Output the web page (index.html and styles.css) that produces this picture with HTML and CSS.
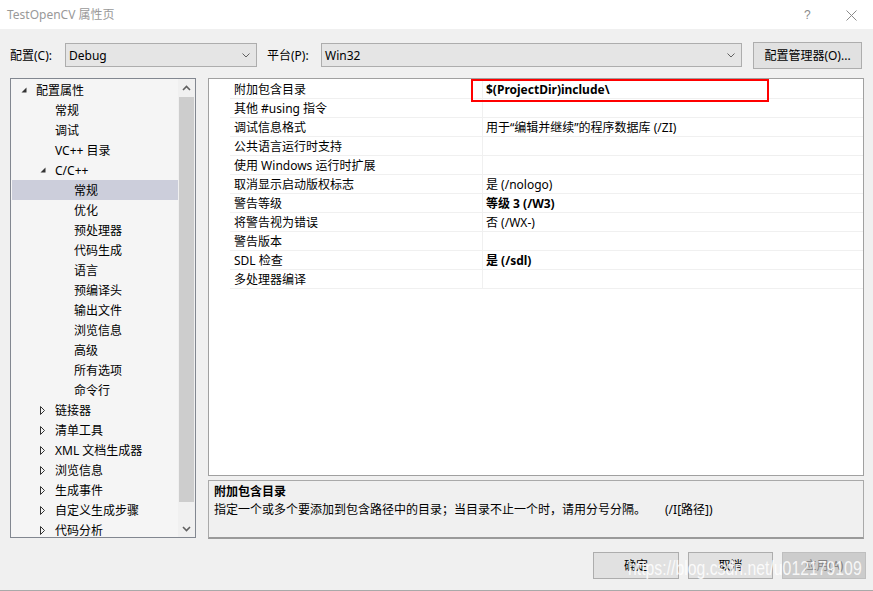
FILE: index.html
```html
<!DOCTYPE html>
<html lang="zh-CN">
<head>
<meta charset="utf-8">
<title>TestOpenCV 属性页</title>
<link rel="stylesheet" href="styles.css">
</head>
<body>
<div class="window">
  <div class="titlebar">
    <span class="title">TestOpenCV 属性页</span>
    <span class="help">?</span>
    <span class="close"><svg width="11" height="11" viewBox="0 0 11 11"><path d="M0.5 0.5 L10.5 10.5 M10.5 0.5 L0.5 10.5" stroke="#8a8a8a" stroke-width="1" fill="none"/></svg></span>
  </div>

  <div class="toolbar">
    <span class="lbl lbl-config">配置(C):</span>
    <div class="combo combo-config"><span>Debug</span><svg class="chev" width="8" height="5" viewBox="0 0 8 5"><path d="M0.5 0.5 L4 4 L7.5 0.5" stroke="#606060" fill="none"/></svg></div>
    <span class="lbl lbl-platform">平台(P):</span>
    <div class="combo combo-platform"><span>Win32</span><svg class="chev" width="8" height="5" viewBox="0 0 8 5"><path d="M0.5 0.5 L4 4 L7.5 0.5" stroke="#606060" fill="none"/></svg></div>
    <div class="btn btn-manager">配置管理器(O)...</div>
  </div>

  <div class="main">
    <div class="tree">
      <div class="tree-list">
        <div class="trow l0"><span class="tw"><svg width="6" height="6" viewBox="0 0 6 6"><path d="M5.5 0.5 L5.5 5.5 L0.5 5.5 Z" fill="#333"/></svg></span>配置属性</div>
        <div class="trow l1"><span class="tw"></span>常规</div>
        <div class="trow l1"><span class="tw"></span>调试</div>
        <div class="trow l1"><span class="tw"></span>VC++ 目录</div>
        <div class="trow l1"><span class="tw"><svg width="6" height="6" viewBox="0 0 6 6"><path d="M5.5 0.5 L5.5 5.5 L0.5 5.5 Z" fill="#333"/></svg></span>C/C++</div>
        <div class="trow l2 sel"><span class="tw"></span>常规</div>
        <div class="trow l2"><span class="tw"></span>优化</div>
        <div class="trow l2"><span class="tw"></span>预处理器</div>
        <div class="trow l2"><span class="tw"></span>代码生成</div>
        <div class="trow l2"><span class="tw"></span>语言</div>
        <div class="trow l2"><span class="tw"></span>预编译头</div>
        <div class="trow l2"><span class="tw"></span>输出文件</div>
        <div class="trow l2"><span class="tw"></span>浏览信息</div>
        <div class="trow l2"><span class="tw"></span>高级</div>
        <div class="trow l2"><span class="tw"></span>所有选项</div>
        <div class="trow l2"><span class="tw"></span>命令行</div>
        <div class="trow l1"><span class="tw"><svg width="6" height="9" viewBox="0 0 6 9"><path d="M0.5 0.5 L4.5 4.5 L0.5 8.5 Z" stroke="#333" fill="none"/></svg></span>链接器</div>
        <div class="trow l1"><span class="tw"><svg width="6" height="9" viewBox="0 0 6 9"><path d="M0.5 0.5 L4.5 4.5 L0.5 8.5 Z" stroke="#333" fill="none"/></svg></span>清单工具</div>
        <div class="trow l1"><span class="tw"><svg width="6" height="9" viewBox="0 0 6 9"><path d="M0.5 0.5 L4.5 4.5 L0.5 8.5 Z" stroke="#333" fill="none"/></svg></span>XML 文档生成器</div>
        <div class="trow l1"><span class="tw"><svg width="6" height="9" viewBox="0 0 6 9"><path d="M0.5 0.5 L4.5 4.5 L0.5 8.5 Z" stroke="#333" fill="none"/></svg></span>浏览信息</div>
        <div class="trow l1"><span class="tw"><svg width="6" height="9" viewBox="0 0 6 9"><path d="M0.5 0.5 L4.5 4.5 L0.5 8.5 Z" stroke="#333" fill="none"/></svg></span>生成事件</div>
        <div class="trow l1"><span class="tw"><svg width="6" height="9" viewBox="0 0 6 9"><path d="M0.5 0.5 L4.5 4.5 L0.5 8.5 Z" stroke="#333" fill="none"/></svg></span>自定义生成步骤</div>
        <div class="trow l1"><span class="tw"><svg width="6" height="9" viewBox="0 0 6 9"><path d="M0.5 0.5 L4.5 4.5 L0.5 8.5 Z" stroke="#333" fill="none"/></svg></span>代码分析</div>
      </div>
      <div class="vscroll">
        <div class="sb-btn"><svg width="9" height="6" viewBox="0 0 9 6"><path d="M1 5 L4.5 1.5 L8 5" stroke="#606060" stroke-width="1.6" fill="none"/></svg></div>
        <div class="sb-thumb"></div>
        <div class="sb-space"></div>
        <div class="sb-btn"><svg width="9" height="6" viewBox="0 0 9 6"><path d="M1 1 L4.5 4.5 L8 1" stroke="#606060" stroke-width="1.6" fill="none"/></svg></div>
      </div>
    </div>

    <div class="right">
      <div class="grid">
        <div class="grow"><span class="gm"></span><span class="gn">附加包含目录</span><span class="gv b">$(ProjectDir)include\</span></div>
        <div class="grow"><span class="gm"></span><span class="gn">其他 #using 指令</span><span class="gv"></span></div>
        <div class="grow"><span class="gm"></span><span class="gn">调试信息格式</span><span class="gv">用于“编辑并继续”的程序数据库 (/ZI)</span></div>
        <div class="grow"><span class="gm"></span><span class="gn">公共语言运行时支持</span><span class="gv"></span></div>
        <div class="grow"><span class="gm"></span><span class="gn">使用 Windows 运行时扩展</span><span class="gv"></span></div>
        <div class="grow"><span class="gm"></span><span class="gn">取消显示启动版权标志</span><span class="gv">是 (/nologo)</span></div>
        <div class="grow"><span class="gm"></span><span class="gn">警告等级</span><span class="gv b">等级 3 (/W3)</span></div>
        <div class="grow"><span class="gm"></span><span class="gn">将警告视为错误</span><span class="gv">否 (/WX-)</span></div>
        <div class="grow"><span class="gm"></span><span class="gn">警告版本</span><span class="gv"></span></div>
        <div class="grow"><span class="gm"></span><span class="gn">SDL 检查</span><span class="gv b">是 (/sdl)</span></div>
        <div class="grow"><span class="gm"></span><span class="gn">多处理器编译</span><span class="gv"></span></div>
        <div class="annot"></div>
      </div>
      <div class="desc">
        <div class="desc-title">附加包含目录</div>
        <div class="desc-text"><span>指定一个或多个要添加到包含路径中的目录；当目录不止一个时，请用分号分隔。</span><span class="desc-switch">(/I[路径])</span></div>
      </div>
    </div>
  </div>

  <div class="footer">
    <div class="btn btn-ok">确定</div>
    <div class="btn btn-cancel">取消</div>
    <div class="btn btn-apply disabled">应用(A)</div>
  </div>

  <div class="watermark">https://blog.csdn.net/u012179109</div>
</div>
</body>
</html>
```
FILE: styles.css
```css
html, body {
  margin: 0;
  padding: 0;
}
body {
  width: 873px;
  height: 591px;
  overflow: hidden;
  background: #f0f0f0;
  font-family: "Noto Sans", "Noto Sans CJK SC", sans-serif;
  font-size: 12px;
  color: #000;
}
.window {
  position: relative;
  width: 873px;
  height: 591px;
  box-sizing: border-box;
  background: #f0f0f0;
  display: flex;
  flex-direction: column;
  border-bottom: 1px solid #a9a9a9;
}

/* title bar */
.titlebar {
  height: 29px;
  background: #fff;
  display: flex;
  align-items: center;
  padding-left: 7px;
  padding-top: 1px;
  box-sizing: border-box;
  flex: none;
}
.title {
  color: #999;
  line-height: 14px;
}
.help {
  margin-left: auto;
  color: #8a8a8a;
  font-family: "Liberation Sans", sans-serif;
  font-size: 12px;
  line-height: 12px;
  width: 12px;
}
.close {
  margin-left: 30px;
  margin-right: 16px;
  display: flex;
}

/* toolbar */
.toolbar {
  display: flex;
  align-items: flex-start;
  margin-top: 13px;
  height: 27px;
  padding-left: 10px;
  flex: none;
}
.lbl {
  line-height: 16px;
  margin-top: 6px;
}
.lbl-config { width: 55px; }
.lbl-platform { width: 54px; margin-left: 10px; }
.combo {
  box-sizing: border-box;
  height: 24px;
  margin-top: 1px;
  border: 1px solid #adadad;
  background: #e5e5e5;
  display: flex;
  align-items: center;
  padding: 1px 6px 0 3px;
  line-height: 16px;
}
.combo .chev { margin-left: auto; margin-top: -1px; }
.combo-config { width: 192px; }
.combo-platform { width: 421px; }
.btn {
  box-sizing: border-box;
  height: 27px;
  border: 1px solid #adadad;
  background: #e1e1e1;
  display: flex;
  align-items: center;
  justify-content: center;
  padding-top: 1px;
  line-height: 16px;
}
.btn-manager { width: 109px; margin-left: 11px; }

/* main area */
.main {
  display: flex;
  gap: 12px;
  margin-top: 9px;
  padding-left: 10px;
  height: 461px;
  flex: none;
}
.tree {
  box-sizing: border-box;
  width: 186px;
  height: 460px;
  border: 1px solid #828790;
  background: #f5f5f5;
  display: flex;
}
.tree-list {
  flex: 1;
  padding-top: 1px;
  overflow: hidden;
}
.trow {
  box-sizing: border-box;
  height: 20px;
  padding-top: 2px;
  display: flex;
  align-items: center;
  white-space: nowrap;
  line-height: 16px;
}
.trow .tw { margin-top: -2px; }
.trow.l0 { padding-left: 10px; }
.trow.l1 { padding-left: 29px; }
.trow.l2 { padding-left: 48px; }
.trow.sel {
  background: #cccedb;
  margin-left: 1px;
  padding-left: 47px;
}
.tw {
  width: 15px;
  flex: none;
  display: flex;
  align-items: center;
}
.vscroll {
  width: 17px;
  flex: none;
  background: #f0f0f0;
  display: flex;
  flex-direction: column;
}
.sb-btn {
  height: 17px;
  display: flex;
  align-items: center;
  justify-content: center;
  flex: none;
}
.sb-thumb {
  height: 405px;
  margin: 1px 1px 0 1px;
  background: #cdcdcd;
  flex: none;
}
.sb-space { flex: 1; }

/* property grid */
.right {
  width: 656px;
  display: flex;
  flex-direction: column;
  gap: 4px;
}
.grid {
  position: relative;
  box-sizing: border-box;
  height: 398px;
  border: 1px solid #a0a0a0;
  background: #fff;
  padding-top: 1px;
}
.grow {
  display: flex;
  height: 19px;
}
.gm {
  width: 21px;
  flex: none;
}
.gn, .gv {
  box-sizing: border-box;
  height: 19px;
  border-bottom: 1px solid #f0f0f0;
  padding-top: 1px;
  line-height: 17px;
  white-space: nowrap;
}
.gn {
  width: 253px;
  padding-left: 4px;
  border-right: 1px solid #f0f0f0;
  flex: none;
}
.gv {
  flex: 1;
  padding-left: 3px;
}
.b { font-weight: bold; }
.annot {
  position: absolute;
  left: 262px;
  top: 0;
  width: 298px;
  height: 23px;
  box-sizing: border-box;
  border: 2px solid #f00;
}

/* description */
.desc {
  box-sizing: border-box;
  height: 59px;
  border: 1px solid #a9a9a9;
  border-bottom: 2px solid #9a9a9a;
  background: #f0f0f0;
  padding: 2px 5px 0 5px;
}
.desc-title {
  font-weight: bold;
  line-height: 18px;
}
.desc-text {
  line-height: 18px;
  white-space: nowrap;
}
.desc-switch { margin-left: 19px; }

/* footer */
.footer {
  display: flex;
  justify-content: flex-end;
  gap: 9px;
  margin-top: 13px;
  padding-right: 7px;
  flex: none;
}
.btn-ok { width: 86px; }
.btn-cancel { width: 85px; }
.btn-apply { width: 84px; }
.btn.disabled {
  background: #cccccc;
  border-color: #bfbfbf;
  color: #838383;
}

.watermark {
  position: absolute;
  left: 628px;
  top: 557px;
  font-family: "Liberation Sans", sans-serif;
  font-size: 20px;
  line-height: 22px;
  color: rgba(255, 255, 255, 0.85);
  transform: scaleX(0.79);
  transform-origin: left top;
  white-space: nowrap;
}
```
